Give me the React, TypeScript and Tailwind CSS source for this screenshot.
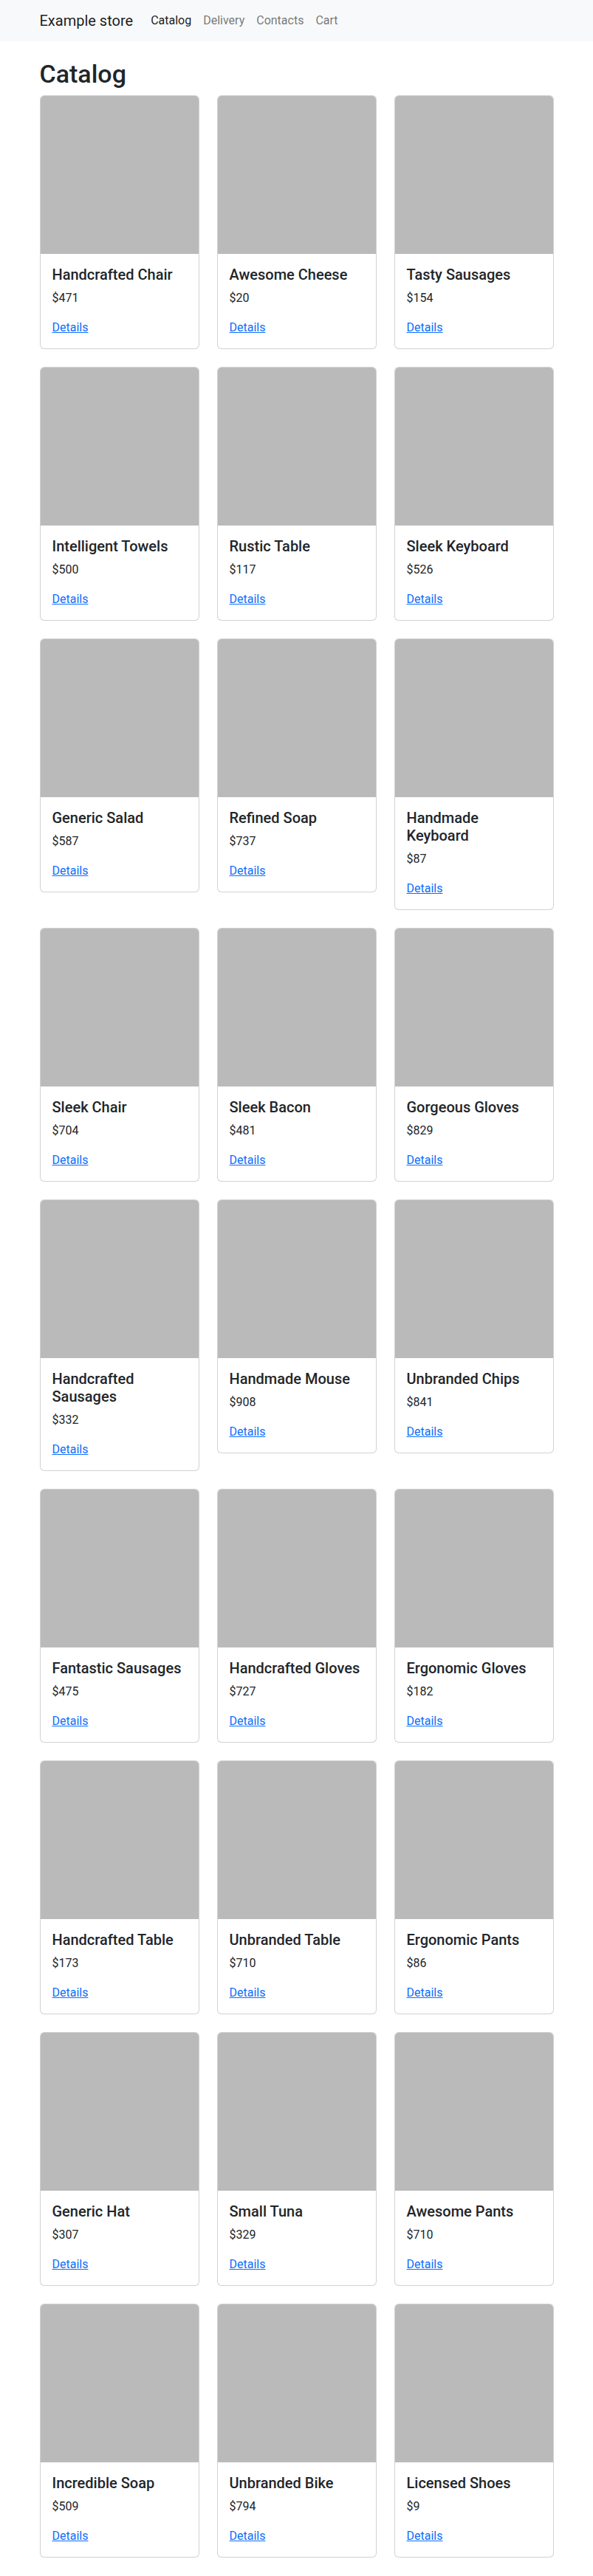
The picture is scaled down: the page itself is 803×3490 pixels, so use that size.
import React from "react";

const products = [
  { name: "Handcrafted Chair", price: 471 },
  { name: "Awesome Cheese", price: 20 },
  { name: "Tasty Sausages", price: 154 },
  { name: "Intelligent Towels", price: 500 },
  { name: "Rustic Table", price: 117 },
  { name: "Sleek Keyboard", price: 526 },
  { name: "Generic Salad", price: 587 },
  { name: "Refined Soap", price: 737 },
  { name: "Handmade Keyboard", price: 87 },
  { name: "Sleek Chair", price: 704 },
  { name: "Sleek Bacon", price: 481 },
  { name: "Gorgeous Gloves", price: 829 },
  { name: "Handcrafted Sausages", price: 332 },
  { name: "Handmade Mouse", price: 908 },
  { name: "Unbranded Chips", price: 841 },
  { name: "Fantastic Sausages", price: 475 },
  { name: "Handcrafted Gloves", price: 727 },
  { name: "Ergonomic Gloves", price: 182 },
  { name: "Handcrafted Table", price: 173 },
  { name: "Unbranded Table", price: 710 },
  { name: "Ergonomic Pants", price: 86 },
  { name: "Generic Hat", price: 307 },
  { name: "Small Tuna", price: 329 },
  { name: "Awesome Pants", price: 710 },
  { name: "Incredible Soap", price: 509 },
  { name: "Unbranded Bike", price: 794 },
  { name: "Licensed Shoes", price: 9 },
];

const links = ["Catalog", "Delivery", "Contacts", "Cart"];

const App: React.FC = () => (
  <div className="min-h-screen bg-white text-[#212529] font-['Roboto','Liberation_Sans',sans-serif] text-base leading-6">
    <nav className="bg-[#f8f9fa] py-2">
      <div className="w-[720px] mx-auto px-3 flex items-center">
        <a href="#" className="text-xl leading-[30px] py-[5px] mr-4 text-black/90">
          Example store
        </a>
        <ul className="flex">
          {links.map((l, i) => (
            <li key={l}>
              <a
                href="#"
                className={`block px-2 py-2 ${i === 0 ? "text-black/90" : "text-black/55"}`}
              >
                {l}
              </a>
            </li>
          ))}
        </ul>
      </div>
    </nav>
    <main className="w-[720px] mx-auto px-3 pb-6">
      <h1 className="mt-6 mb-2 text-[34px] leading-[1.2] font-medium">Catalog</h1>
      <div className="grid grid-cols-3 gap-6 items-start">
        {products.map((p) => (
          <div
            key={p.name}
            className="border border-black/[0.175] rounded-md overflow-hidden bg-white"
          >
            <div className="w-full aspect-square bg-[#bababa]"></div>
            <div className="p-4">
              <h5 className="text-xl leading-[1.2] font-medium mb-2">{p.name}</h5>
              <p className="mb-4">${p.price}</p>
              <a href="#" className="text-[#0d6efd] underline">
                Details
              </a>
            </div>
          </div>
        ))}
      </div>
    </main>
  </div>
);

export default App;
